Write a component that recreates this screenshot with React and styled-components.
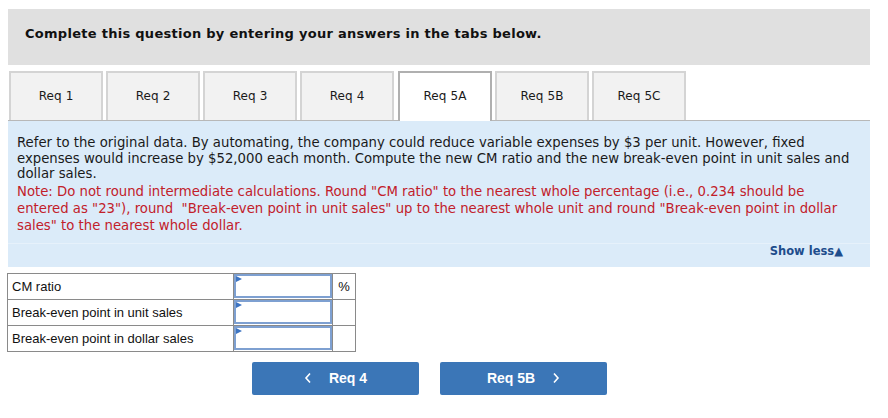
import React from "react";
import styled, { createGlobalStyle } from "styled-components";

const Global = createGlobalStyle`
  html, body { margin: 0; padding: 0; background: #fff; }
  body { font-family: "DejaVu Sans", Verdana, sans-serif; }
  * { box-sizing: border-box; }
`;

const Page = styled.div`
  width: 888px;
  padding: 9px 18px 0 8px;
`;

const Header = styled.div`
  height: 56px;
  background: #e0e0e0;
  display: flex;
  align-items: center;
  padding: 0 0 7px 17px;
  font-size: 13px;
  letter-spacing: 0.28px;
  font-weight: bold;
  color: #111;
`;

const TabBar = styled.div`
  margin-top: 6px;
  display: flex;
  gap: 3px;
  padding-left: 1px;
  border-bottom: 1px solid #b8b8b8;
  height: 50px;
`;

const Tab = styled.div`
  width: 94px;
  height: ${(p) => (p.$active ? "50px" : "49px")};
  margin-bottom: ${(p) => (p.$active ? "-1px" : "0")};
  display: flex;
  align-items: center;
  justify-content: center;
  padding-bottom: 2px;
  font-size: 12px;
  letter-spacing: 0.1px;
  color: #1a1a1a;
  background: ${(p) => (p.$active ? "#fff" : "#f2f2f2")};
  border: 2px solid ${(p) => (p.$active ? "#b0b0b0" : "#d4d4d4")};
  border-bottom: none;
  ${(p) => (p.$active ? "margin-left: 1px;" : "")}
`;

const Panel = styled.div`
  background: #dbebf9;
`;

const PanelBody = styled.div`
  padding: 14px 18px 9px 9px;
  font-size: 13.25px;
  color: #1a1a1a;
  border-bottom: 1px solid #e6f1fb;
`;

const Para = styled.p`
  margin: 0;
  line-height: 15.5px;
`;

const Note = styled.p`
  margin: 1px 0 0;
  line-height: 17px;
  color: #c2202a;
`;

const ShowRow = styled.div`
  height: 23px;
  display: flex;
  justify-content: flex-end;
  align-items: flex-start;
  padding: 0 27px 0 0;
  line-height: 14px;
  font-size: 11.5px;
  font-weight: bold;
  color: #1e4d8c;
`;

const Table = styled.table`
  margin: 6px 0 0 -1px;
  border-collapse: collapse;
  font-family: "Liberation Sans", Arial, sans-serif;
  font-size: 13px;
  color: #111;
`;

const Label = styled.td`
  width: 226px;
  height: 26px;
  border: 1.5px solid #8a8a8a;
  padding: 1px 4px 0;
`;

const InputCell = styled.td`
  width: 99px;
  height: 26px;
  border: 1.5px solid #8a8a8a;
  padding: 0;
  position: relative;
`;

const Input = styled.div`
  height: 24px;
  margin: 0;
  border: 2px solid #7ea0d1;
  background: #fff;
`;

const Marker = styled.span`
  position: absolute;
  left: 2px;
  top: 2px;
  width: 0;
  height: 0;
  border-top: 3.5px solid transparent;
  border-bottom: 3.5px solid transparent;
  border-left: 6px solid #3d74c2;
`;

const UnitCell = styled.td`
  width: 23px;
  height: 26px;
  border: 1.5px solid #8a8a8a;
  text-align: center;
  padding: 0;
  font-size: 13px;
`;

const Nav = styled.div`
  display: flex;
  gap: 21px;
  margin: 10px 0 0 244px;
`;

const NavButton = styled.div`
  width: 167px;
  height: 33px;
  background: #3b76b7;
  border-radius: 2px;
  display: flex;
  align-items: center;
  justify-content: center;
  gap: 17px;
  color: #fff;
  font-family: "Liberation Sans", Arial, sans-serif;
  font-weight: bold;
  font-size: 14px;
  padding-bottom: 1px;
`;

const Chevron = ({ dir }) => (
  <svg width="8" height="12" viewBox="0 0 8 12">
    <path
      d={dir === "left" ? "M6 1.5 L2 6 L6 10.5" : "M2 1.5 L6 6 L2 10.5"}
      fill="none"
      stroke="#fff"
      strokeWidth="1.6"
    />
  </svg>
);

const tabs = ["Req 1", "Req 2", "Req 3", "Req 4", "Req 5A", "Req 5B", "Req 5C"];

const rows = [
  { label: "CM ratio", unit: "%" },
  { label: "Break-even point in unit sales", unit: "" },
  { label: "Break-even point in dollar sales", unit: "" },
];

export default function App() {
  return (
    <>
      <Global />
      <Page>
        <Header>Complete this question by entering your answers in the tabs below.</Header>
        <TabBar>
          {tabs.map((t) => (
            <Tab key={t} $active={t === "Req 5A"}>
              {t}
            </Tab>
          ))}
        </TabBar>
        <Panel>
          <PanelBody>
            <Para>
              Refer to the original data. By automating, the company could reduce variable expenses by $3 per
              unit. However, fixed expenses would increase by $52,000 each month. Compute the new CM ratio and
              the new break-even point in unit sales and dollar sales.
            </Para>
            <Note>
              Note: Do not round intermediate calculations. Round "CM ratio" to the nearest whole percentage
              (i.e., 0.234 should be entered as "23"), round &nbsp;"Break-even point in unit sales" up to the
              nearest whole unit and round "Break-even point in dollar sales" to the nearest whole dollar.
            </Note>
          </PanelBody>
          <ShowRow>Show less▲</ShowRow>
        </Panel>
        <Table>
          <tbody>
            {rows.map((r) => (
              <tr key={r.label}>
                <Label>{r.label}</Label>
                <InputCell>
                  <Input />
                  <Marker />
                </InputCell>
                <UnitCell>{r.unit}</UnitCell>
              </tr>
            ))}
          </tbody>
        </Table>
        <Nav>
          <NavButton>
            <Chevron dir="left" />
            <span>Req 4</span>
          </NavButton>
          <NavButton>
            <span>Req 5B</span>
            <Chevron dir="right" />
          </NavButton>
        </Nav>
      </Page>
    </>
  );
}
